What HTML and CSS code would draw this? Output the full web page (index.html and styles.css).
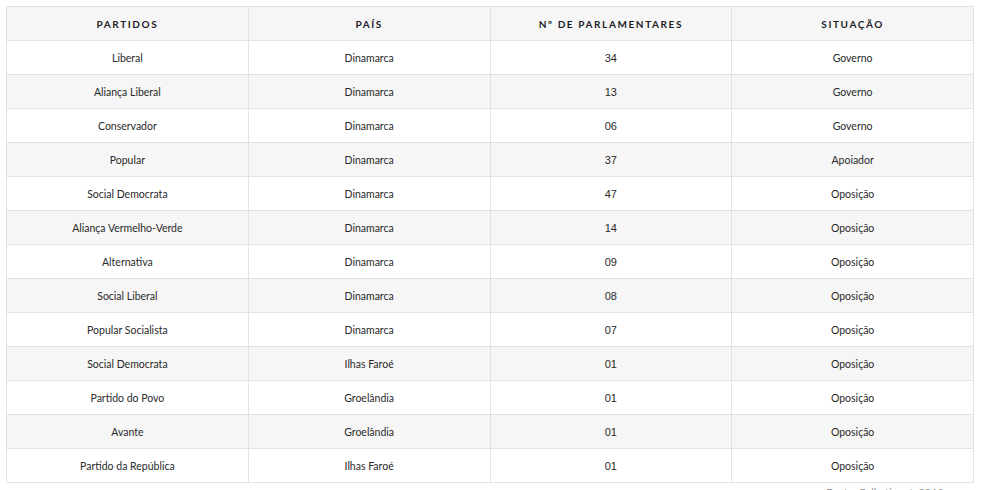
FILE: index.html
```html
<!DOCTYPE html>
<html lang="pt">
<head>
<meta charset="utf-8">
<link rel="stylesheet" href="styles.css">
</head>
<body>
<div class="wrap">
<table class="parties">
<thead>
<tr><th>Partidos</th><th>País</th><th>Nº de Parlamentares</th><th>Situação</th></tr>
</thead>
<tbody>
<tr><td>Liberal</td><td>Dinamarca</td><td class="num">34</td><td>Governo</td></tr>
<tr><td>Aliança Liberal</td><td>Dinamarca</td><td class="num">13</td><td>Governo</td></tr>
<tr><td>Conservador</td><td>Dinamarca</td><td class="num">06</td><td>Governo</td></tr>
<tr><td>Popular</td><td>Dinamarca</td><td class="num">37</td><td>Apoiador</td></tr>
<tr><td>Social Democrata</td><td>Dinamarca</td><td class="num">47</td><td>Oposição</td></tr>
<tr><td>Aliança Vermelho-Verde</td><td>Dinamarca</td><td class="num">14</td><td>Oposição</td></tr>
<tr><td>Alternativa</td><td>Dinamarca</td><td class="num">09</td><td>Oposição</td></tr>
<tr><td>Social Liberal</td><td>Dinamarca</td><td class="num">08</td><td>Oposição</td></tr>
<tr><td>Popular Socialista</td><td>Dinamarca</td><td class="num">07</td><td>Oposição</td></tr>
<tr><td>Social Democrata</td><td>Ilhas Faroé</td><td class="num">01</td><td>Oposição</td></tr>
<tr><td>Partido do Povo</td><td>Groelândia</td><td class="num">01</td><td>Oposição</td></tr>
<tr><td>Avante</td><td>Groelândia</td><td class="num">01</td><td>Oposição</td></tr>
<tr><td>Partido da República</td><td>Ilhas Faroé</td><td class="num">01</td><td>Oposição</td></tr>
</tbody>
</table>
<p class="source">Fonte: Folketinget, 2019</p>
</div>
</body>
</html>
```
FILE: styles.css
```css
html, body {
  margin: 0;
  padding: 0;
  background: #fff;
}
body {
  font-family: Lato, "Open Sans", sans-serif;
  color: #222;
}
.wrap {
  padding: 6px 12px 0 6px;
}
.parties {
  width: 968px;
  border-collapse: collapse;
  table-layout: fixed;
  font-size: 10.5px;
}
.parties th,
.parties td {
  border: 1px solid #e2e2e2;
  text-align: center;
  height: 34px;
  padding: 0 8px;
  box-sizing: border-box;
}
.parties th {
  background: #f6f6f6;
  font-weight: 700;
  text-transform: uppercase;
  letter-spacing: 1.6px;
  font-size: 10px;
  color: #1c1c28;
}
.parties td {
  font-size: 10.5px;
  color: #2a2a2a;
}
.parties td.num {
  font-family: "Liberation Sans", Arial, sans-serif;
  font-size: 11px;
}
.parties tbody tr:nth-child(even) td {
  background: #f6f6f6;
}
.source {
  margin: 3px 0 0 0;
  padding-right: 30px;
  text-align: right;
  font-size: 11px;
  color: #999;
}
```
